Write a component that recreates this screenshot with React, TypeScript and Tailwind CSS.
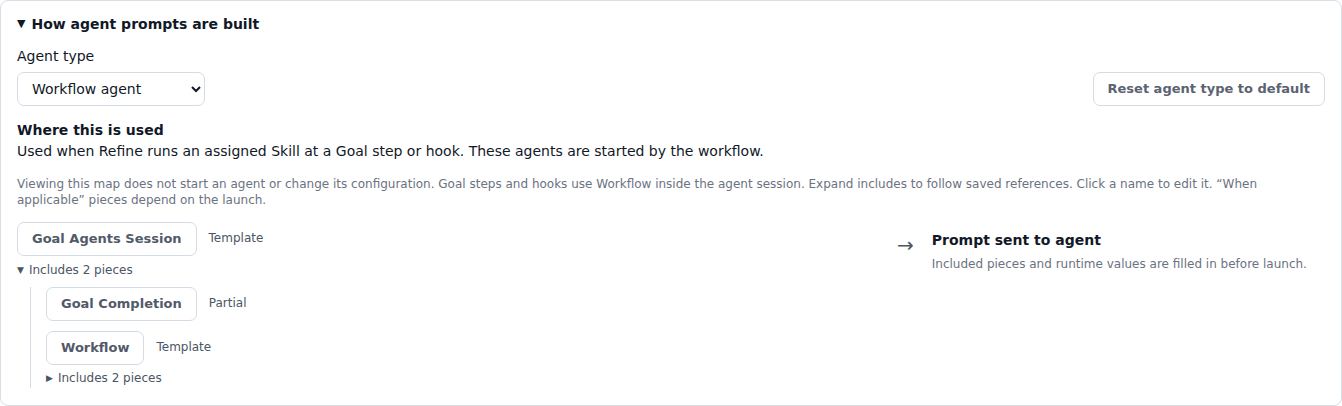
import { useState } from "react";

function PieceButton({ label }: { label: string }) {
  return (
    <button className="h-[34px] px-[14px] rounded-[7px] border border-[#d5dbe5] bg-white text-[13px] font-bold text-[#525a69]">
      {label}
    </button>
  );
}

function Piece({ label, kind }: { label: string; kind: string }) {
  return (
    <div className="flex items-start gap-3">
      <PieceButton label={label} />
      <span className="pt-[7px] text-[12px] text-[#4b5563]">{kind}</span>
    </div>
  );
}

export default function App() {
  const [agent, setAgent] = useState("workflow");

  return (
    <div className="p-0 bg-white" style={{ fontFamily: '"DejaVu Sans", sans-serif' }}>
      <div className="h-[406px] w-[1342px] rounded-[8px] border border-[#d8dde6] px-[16px] pt-[13px] text-[#111827]">
        <div className="flex items-center gap-[6px] text-[14px] font-bold leading-[20px]">
          <span className="text-[11px]">▼</span>
          <span>How agent prompts are built</span>
        </div>

        <div className="mt-[12px] text-[14px] leading-[20px]">Agent type</div>
        <div className="mt-[6px] flex items-center justify-between">
          <select
            value={agent}
            onChange={(e) => setAgent(e.target.value)}
            className="h-[34px] w-[188px] rounded-[7px] border border-[#d5dbe5] bg-white pl-[10px] pr-2 text-[14px] text-[#111827]"
          >
            <option value="workflow">Workflow agent</option>
            <option value="chat">Chat agent</option>
          </select>
          <button className="h-[34px] rounded-[7px] border border-[#d5dbe5] bg-white px-[14px] text-[13px] font-bold text-[#5b6372]">
            Reset agent type to default
          </button>
        </div>

        <div className="mt-[14px] text-[14px] font-bold leading-[20px]">Where this is used</div>
        <div className="mt-[1px] text-[14px] leading-[20px]">
          Used when Refine runs an assigned Skill at a Goal step or hook. These agents are started by the workflow.
        </div>
        <p className="mt-[15px] text-[12px] leading-[16px] text-[#6b7280]">
          Viewing this map does not start an agent or change its configuration. Goal steps and hooks use Workflow inside the agent session. Expand includes to follow saved references. Click a name to edit it. “When applicable” pieces depend on the launch.
        </p>

        <div className="mt-[14px] grid grid-cols-[2fr_1fr] gap-6">
          <div>
            <Piece label="Goal Agents Session" kind="Template" />
            <div className="mt-[6px] flex items-center gap-[5px] text-[12px] leading-[16px] text-[#4b5563]">
              <span className="text-[9px]">▼</span>
              <span>Includes 2 pieces</span>
            </div>
            <div className="ml-[13px] mt-[9px] border-l border-[#d5dbe5] pl-[15px] pb-[2px] flex flex-col gap-[10px]">
              <Piece label="Goal Completion" kind="Partial" />
              <Piece label="Workflow" kind="Template" />
              <div className="-mt-[5px] flex items-center gap-[5px] text-[12px] leading-[16px] text-[#4b5563]">
                <span className="text-[9px]">▶</span>
                <span>Includes 2 pieces</span>
              </div>
            </div>
          </div>

          <div className="flex items-start gap-[18px] pt-[9px]">
            <span className="pt-[2px] text-[20px] leading-[24px] text-[#4b5563]">→</span>
            <div>
              <div className="text-[14px] font-bold leading-[18px]">Prompt sent to agent</div>
              <div className="mt-[7px] text-[12px] leading-[16px] text-[#6b7280]">
                Included pieces and runtime values are filled in before launch.
              </div>
            </div>
          </div>
        </div>
      </div>
    </div>
  );
}
